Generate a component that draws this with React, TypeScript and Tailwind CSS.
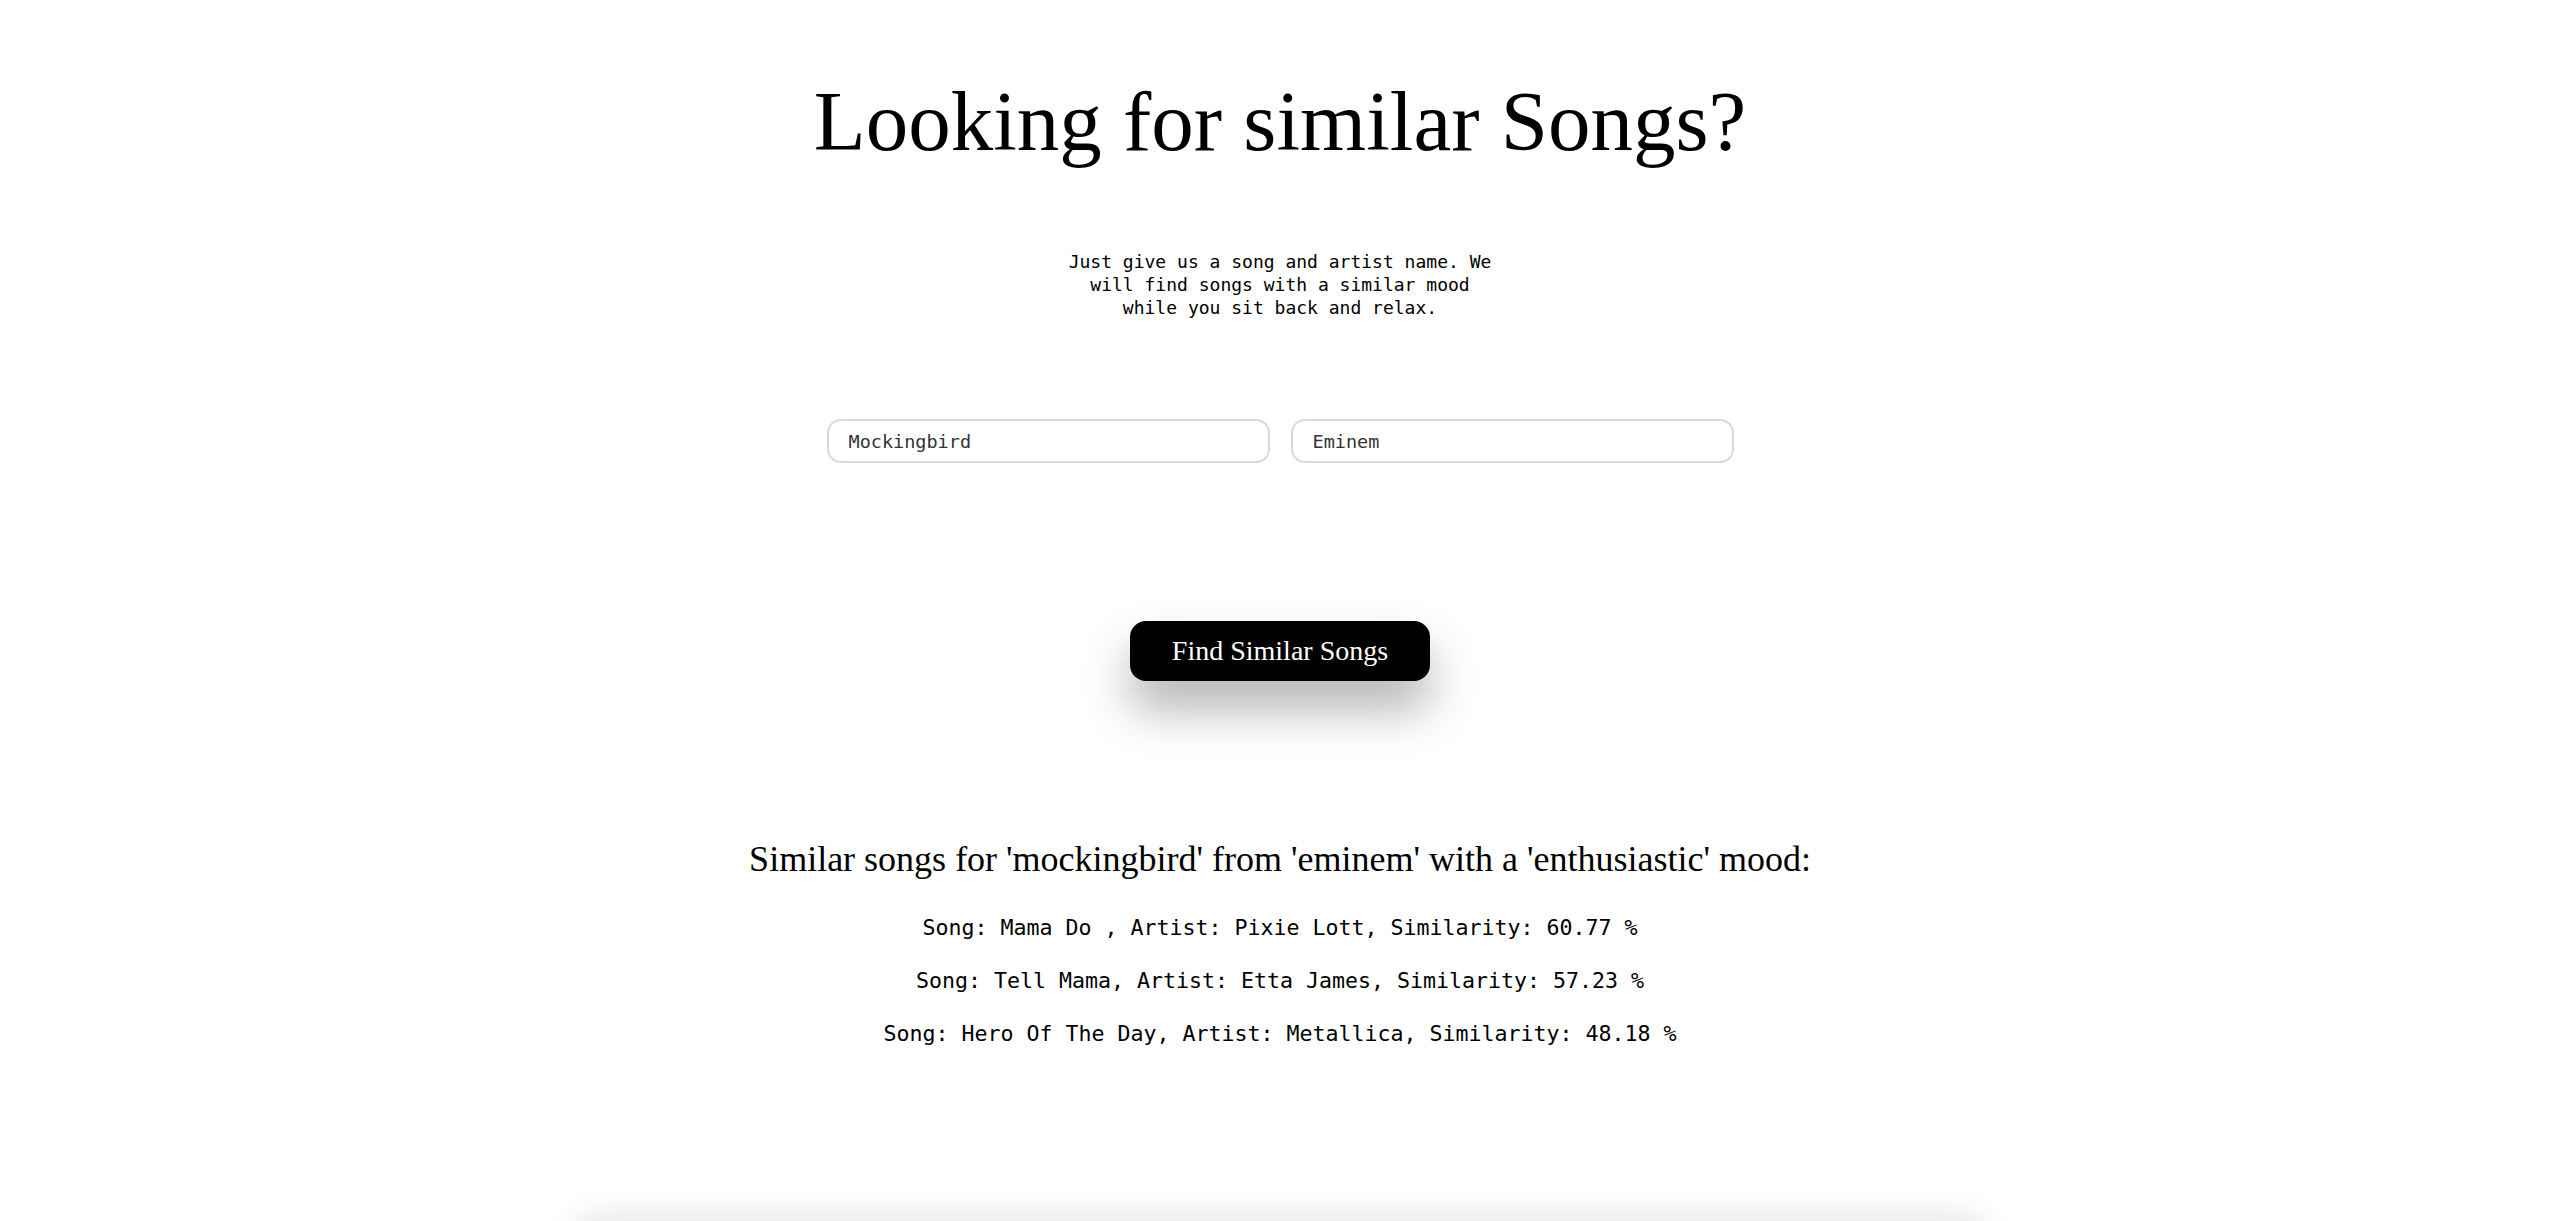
import { useState } from "react";

export default function App() {
  const [song, setSong] = useState("Mockingbird");
  const [artist, setArtist] = useState("Eminem");

  const results = [
    { song: "Mama Do ", artist: "Pixie Lott", sim: "60.77" },
    { song: "Tell Mama", artist: "Etta James", sim: "57.23" },
    { song: "Hero Of The Day", artist: "Metallica", sim: "48.18" },
  ];

  return (
    <div className="min-h-screen bg-white text-black overflow-hidden">
      <div className="flex flex-col items-center">
        {/* HEADER */}
        <h1 className="mt-[70px] text-[85px] leading-[1.2] font-['Liberation_Serif',serif]">
          Looking for similar Songs?
        </h1>

        <p className="mt-[78px] w-[440px] text-center text-[18px] leading-[23px] font-['DejaVu_Sans_Mono',monospace]">
          Just give us a song and artist name. We will find songs with a similar mood while you sit back and relax.
        </p>

        {/* FORM */}
        <div className="mt-[100px] flex gap-[21px]">
          <input
            value={song}
            onChange={(e) => setSong(e.target.value)}
            className="w-[443px] h-[44px] px-[20px] rounded-[14px] border-2 border-[#d9d9d9] outline-none text-[18.5px] text-[#333] font-['DejaVu_Sans_Mono',monospace]"
          />
          <input
            value={artist}
            onChange={(e) => setArtist(e.target.value)}
            className="w-[443px] h-[44px] px-[20px] rounded-[14px] border-2 border-[#d9d9d9] outline-none text-[18.5px] text-[#333] font-['DejaVu_Sans_Mono',monospace]"
          />
        </div>

        <button className="mt-[158px] w-[300px] h-[60px] rounded-[16px] bg-black text-white text-[28px] font-['Liberation_Serif',serif] shadow-[0_28px_48px_rgba(0,0,0,0.3)]">
          Find Similar Songs
        </button>

        {/* RESULTS */}
        <h2 className="mt-[157px] text-[36px] leading-[1.2] font-['Liberation_Serif',serif]">
          Similar songs for 'mockingbird' from 'eminem' with a 'enthusiastic' mood:
        </h2>
        <div className="mt-[30px] flex flex-col items-center gap-[20px] text-[21.6px] leading-[33px] font-['DejaVu_Sans_Mono',monospace]">
          {results.map((r) => (
            <div key={r.song}>
              Song: {r.song}, Artist: {r.artist}, Similarity: {r.sim} %
            </div>
          ))}
        </div>

        <div className="mt-[172px] w-[1430px] h-[400px] rounded-[40px] bg-white shadow-[0_-8px_30px_rgba(0,0,0,0.1)]" />
      </div>
    </div>
  );
}
